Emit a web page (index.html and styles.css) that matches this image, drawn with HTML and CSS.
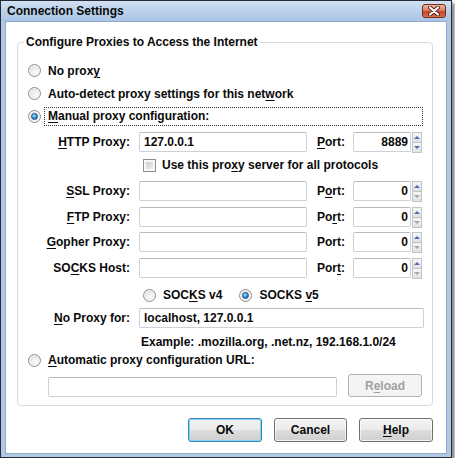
FILE: index.html
```html
<!DOCTYPE html>
<html>
<head>
<meta charset="utf-8">
<link rel="stylesheet" href="styles.css">
</head>
<body>
<div class="window">
  <div class="titlebar">
    <span class="title">Connection Settings</span>
    <span class="close"><svg width="14" height="10" viewBox="0 0 14 10"><path d="M3 1.5 L11 8.5 M11 1.5 L3 8.5" stroke="#5a1f12" stroke-width="4" stroke-linecap="round"/><path d="M3 1.5 L11 8.5 M11 1.5 L3 8.5" stroke="#ffffff" stroke-width="2.2" stroke-linecap="round"/></svg></span>
  </div>
  <div class="client">
    <fieldset class="group">
      <legend>Configure Proxies to Access the Internet</legend>
      <div class="gbody">
        <div class="rrow"><span class="radio"></span><span>No prox<u>y</u></span></div>
        <div class="rrow"><span class="radio"></span><span>Auto-detect proxy settings for this net<u>w</u>ork</span></div>
        <div class="rrow"><span class="radio checked"><span class="dot"></span></span><span class="focus"><u>M</u>anual proxy configuration:</span></div>

        <div class="frow r-http">
          <span class="lbl"><u>H</u>TTP Proxy:</span>
          <span class="field host">127.0.0.1</span>
          <span class="plbl"><u>P</u>ort:</span>
          <span class="field port">8889</span>
          <span class="spin"><span class="sb"><i class="up"></i></span><span class="sb"><i class="down on"></i></span></span>
        </div>
        <div class="crow"><span class="check"></span><span>Use this pro<u>x</u>y server for all protocols</span></div>

        <div class="frow r-ssl">
          <span class="lbl"><u>S</u>SL Proxy:</span>
          <span class="field host"></span>
          <span class="plbl">P<u>o</u>rt:</span>
          <span class="field port">0</span>
          <span class="spin"><span class="sb"><i class="up"></i></span><span class="sb"><i class="down"></i></span></span>
        </div>
        <div class="frow r-ftp">
          <span class="lbl"><u>F</u>TP Proxy:</span>
          <span class="field host"></span>
          <span class="plbl">Po<u>r</u>t:</span>
          <span class="field port">0</span>
          <span class="spin"><span class="sb"><i class="up"></i></span><span class="sb"><i class="down"></i></span></span>
        </div>
        <div class="frow r-gopher">
          <span class="lbl"><u>G</u>opher Proxy:</span>
          <span class="field host"></span>
          <span class="plbl">Port:</span>
          <span class="field port">0</span>
          <span class="spin"><span class="sb"><i class="up"></i></span><span class="sb"><i class="down"></i></span></span>
        </div>
        <div class="frow r-socks">
          <span class="lbl">SO<u>C</u>KS Host:</span>
          <span class="field host"></span>
          <span class="plbl">Por<u>t</u>:</span>
          <span class="field port">0</span>
          <span class="spin"><span class="sb"><i class="up"></i></span><span class="sb"><i class="down"></i></span></span>
        </div>

        <div class="vrow">
          <span class="radio"></span><span class="v4">SOC<u>K</u>S v4</span>
          <span class="radio checked"><span class="dot"></span></span><span>SOCKS <u>v</u>5</span>
        </div>
        <div class="frow r-noproxy">
          <span class="lbl"><u>N</u>o Proxy for:</span>
          <span class="field wide">localhost, 127.0.0.1</span>
        </div>
        <div class="example">Example: .mozilla.org, .net.nz, 192.168.1.0/24</div>
        <div class="rrow r-auto"><span class="radio"></span><span><u>A</u>utomatic proxy configuration URL:</span></div>
        <div class="urow">
          <span class="field url"></span>
          <span class="btn disabled">R<u>e</u>load</span>
        </div>
      </div>
    </fieldset>
    <div class="buttons">
      <span class="btn default">OK</span>
      <span class="btn cancel">Cancel</span>
      <span class="btn"><u>H</u>elp</span>
    </div>
  </div>
</div>
</body>
</html>
```

FILE: styles.css
```css
* { box-sizing: border-box; }
html, body { margin: 0; background: #ffffff; }
body {
  font-family: "Liberation Sans", Arial, sans-serif;
  font-weight: bold;
  font-size: 12px;
  color: #0a0a0a;
}
u { text-decoration-thickness: 1px; text-underline-offset: 2px; }

.window {
  width: 452px;
  height: 458px;
  border: 1px solid #262c36;
  background: #b2c9e5;
  box-shadow: 3px 3px 3px rgba(0,0,0,0.45);
  display: flex;
  flex-direction: column;
}
.titlebar {
  height: 20px;
  flex: none;
  display: flex;
  align-items: center;
  justify-content: space-between;
  padding: 0 5px 0 6px;
  background: linear-gradient(#d2e1f3, #bed3ec 40%, #a9c5e7);
}
.title { line-height: 15px; }
.close {
  width: 24px;
  height: 14px;
  border: 1px solid #7a2b1b;
  border-radius: 3px;
  background: linear-gradient(#ecb5a5, #d9806a 45%, #c4472b 55%, #d6714f);
  display: flex;
  align-items: center;
  justify-content: center;
}
.client {
  flex: 1;
  margin: 0 4px 3px 4px;
  border: 1px solid #91aacb;
  background: #ffffff;
  display: flex;
  flex-direction: column;
}

.group {
  margin: 13px 13px 0 11px;
  padding: 0 0 8px 0;
  border: 1px solid #d3dbe0;
  border-radius: 4px;
  min-width: 0;
}
.group legend {
  margin-left: 6px;
  padding: 0 2px;
  line-height: 15px;
}
.gbody {
  padding: 9px 0 0 10px;
  display: flex;
  flex-direction: column;
}

.rrow { height: 23px; display: flex; align-items: center; }
.radio {
  width: 13px;
  height: 13px;
  flex: none;
  border-radius: 50%;
  border: 1px solid #8c8e90;
  background: radial-gradient(circle at 60% 65%, #fbfbfb 0, #ececec 45%, #c9c9c9 100%);
  box-shadow: inset 0 0 0 1px #f7f7f7;
  margin-right: 7px;
  display: flex;
  align-items: center;
  justify-content: center;
}
.radio .dot {
  width: 7px;
  height: 7px;
  border-radius: 50%;
  border: 1px solid #1b4f86;
  background: radial-gradient(circle at 40% 35%, #b6ecff 0, #3b9be0 45%, #0b4a8c 100%);
}
.focus {
  flex: 1;
  height: 19px;
  line-height: 17px;
  margin-left: -4px;
  margin-right: 9px;
  padding: 0 3px;
  border: 1px dotted #333;
}

.frow { height: 22px; display: flex; align-items: center; }
.r-http { margin-top: 3px; }
.r-ssl { margin-top: 3px; }
.r-ftp { margin-top: 4px; }
.r-gopher { margin-top: 3px; }
.r-socks { margin-top: 4px; }
.r-noproxy { margin-top: 1px; }

.lbl { width: 102px; text-align: right; flex: none; }
.field {
  height: 20px;
  flex: none;
  border: 1px solid #cdd1d5;
  border-top-color: #b7bbc0;
  border-radius: 2px;
  background: #ffffff;
  line-height: 18px;
  padding: 0 4px;
  white-space: nowrap;
  overflow: hidden;
}
.host { width: 168px; margin-left: 9px; }
.plbl { width: 36px; margin-left: 10px; flex: none; }
.port { width: 58px; text-align: right; padding: 0 2px; }
.spin {
  width: 10px;
  height: 21px;
  margin-left: 1px;
  flex: none;
  display: flex;
  flex-direction: column;
}
.sb {
  flex: 1;
  border: 1px solid #bfc4ca;
  background: linear-gradient(#f7f7f7, #e1e1e1);
  display: flex;
  align-items: center;
  justify-content: center;
}
.sb + .sb { border-top: none; }
.up {
  width: 0; height: 0;
  border-left: 3px solid transparent;
  border-right: 3px solid transparent;
  border-bottom: 3px solid #4c6bb5;
}
.down {
  width: 0; height: 0;
  border-left: 3px solid transparent;
  border-right: 3px solid transparent;
  border-top: 3px solid #a6a6a6;
}
.down.on { border-top-color: #4c6bb5; }

.crow { height: 24px; display: flex; align-items: center; padding-left: 115px; }
.check {
  width: 13px;
  height: 13px;
  flex: none;
  border: 1px solid #8c8e90;
  background: linear-gradient(135deg, #c9c9c9, #f5f5f5);
  box-shadow: inset 0 0 0 2px #f8f8f8;
  margin-right: 6px;
}

.vrow { height: 22px; margin-top: 5px; display: flex; align-items: center; padding-left: 115px; }
.v4 { margin-right: 17px; }

.wide { width: 285px; margin-left: 9px; }
.example { height: 16px; line-height: 16px; margin-top: 5px; padding-left: 113px; }
.r-auto { height: 20px; }

.urow { height: 23px; margin-top: 4px; display: flex; align-items: flex-end; padding-left: 20px; }
.url { width: 289px; }

.btn {
  height: 24px;
  width: 74px;
  flex: none;
  border: 1px solid #707070;
  border-radius: 3px;
  background: linear-gradient(#f3f3f3, #ebebeb 48%, #dddddd 52%, #cfcfcf);
  box-shadow: inset 0 0 0 1px rgba(255,255,255,0.7);
  display: flex;
  align-items: center;
  justify-content: center;
}
.btn.disabled {
  height: 23px;
  margin-left: 11px;
  border-color: #adb2b5;
  background: #f4f4f4;
  box-shadow: none;
  color: #a0a0a0;
}
.btn.default {
  border-color: #3c7fb1;
  background: linear-gradient(#eaf6fd, #d9f0fc 48%, #bee6fd 52%, #a7d9f5);
  box-shadow: inset 0 0 0 1px #d8f2ff;
  background: linear-gradient(#f3f3f3, #ebebeb 48%, #dddddd 52%, #cfcfcf);
  box-shadow: inset 0 0 0 1px #7fd8f7;
}
.btn.cancel { width: 73px; }
.buttons {
  display: flex;
  justify-content: flex-end;
  gap: 12px;
  margin: 12px 13px 0 0;
}
```
